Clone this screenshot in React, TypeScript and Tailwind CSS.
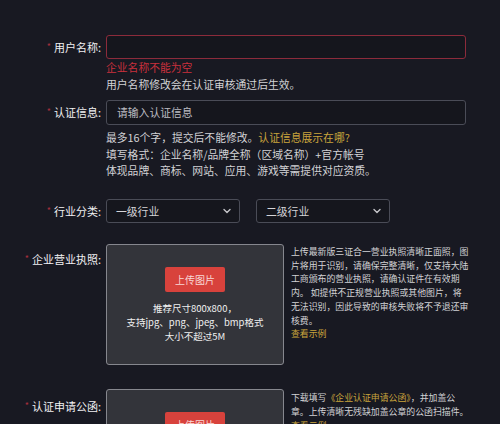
import React from "react";

const Label = ({ children, h = 24 }: { children: React.ReactNode; h?: number }) => (
  <div
    className="w-[101px] shrink-0 flex items-center justify-end text-[11px] text-[#f0f0f2] whitespace-nowrap"
    style={{ height: h }}
  >
    <span className="text-[#a8303d] text-[9px] mr-[3px] leading-none relative top-[-1px]">*</span>
    {children}
  </div>
);

const Chevron = () => (
  <svg width="10" height="10" viewBox="0 0 10 10" fill="none">
    <path d="M2 3.5 L5 6.5 L8 3.5" stroke="#c4c4c8" strokeWidth="1.4" strokeLinecap="round" strokeLinejoin="round" />
  </svg>
);

const UploadBox = ({ clip = false }: { clip?: boolean }) => (
  <div className="w-[178px] h-[121px] shrink-0 bg-[#33343a] border border-[#86878e] rounded-[3px] flex flex-col items-center">
    <div className="mt-[22px] w-[60px] h-[25px] bg-[#d8423c] rounded-[2px] flex items-center justify-center text-[10px] text-[#f8d8d6]">
      上传图片
    </div>
    {!clip && (
      <div className="mt-[9px] text-[9.5px] leading-[14px] text-[#f0f0f0] text-center whitespace-nowrap">
        <div>推荐尺寸800x800，</div>
        <div>支持jpg、png、jpeg、bmp格式</div>
        <div>大小不超过5M</div>
      </div>
    )}
  </div>
);

export default function App() {
  return (
    <div
      className="w-[500px] h-[424px] overflow-hidden bg-[#181922] pt-[35px]"
      style={{ fontFamily: '"Noto Sans CJK SC", "Noto Sans", sans-serif' }}
    >
      {/* Row 1 */}
      <div className="flex items-start">
        <Label>用户名称:</Label>
        <div className="ml-[5px]">
          <div className="w-[360px] h-[24px] bg-[#15161d] border border-[#8c2b3b] rounded-[3px]" />
          <div className="text-[10.8px] leading-[17px] text-[#c9303c]">企业名称不能为空</div>
          <div className="text-[10.8px] leading-[17px] text-[#d2d2d5]">用户名称修改会在认证审核通过后生效。</div>
        </div>
      </div>

      {/* Row 2 */}
      <div className="flex items-start mt-[7px]">
        <Label h={25}>认证信息:</Label>
        <div className="ml-[5px]">
          <div className="w-[360px] h-[25px] bg-[#15161d] border border-[#4a4c57] rounded-[3px] flex items-center pl-[10px] text-[10.8px] text-[#bdbdc2]">
            请输入认证信息
          </div>
          <div className="mt-[4px] text-[10.8px] leading-[16.5px] text-[#d2d2d5] whitespace-nowrap">
            <div>
              最多16个字，提交后不能修改。<span className="text-[#c9a43c]">认证信息展示在哪?</span>
            </div>
            <div>填写格式：企业名称/品牌全称（区域名称）+官方帐号</div>
            <div>体现品牌、商标、网站、应用、游戏等需提供对应资质。</div>
          </div>
        </div>
      </div>

      {/* Row 3 */}
      <div className="flex items-start mt-[20.5px]">
        <Label>行业分类:</Label>
        <div className="ml-[5px] flex gap-[16px]">
          <div className="w-[134px] h-[24px] bg-[#15161d] border border-[#4a4c57] rounded-[3px] flex items-center justify-between pl-[9px] pr-[7px] text-[10.8px] text-[#d4d4d8]">
            <span>一级行业</span>
            <Chevron />
          </div>
          <div className="w-[134px] h-[24px] bg-[#15161d] border border-[#4a4c57] rounded-[3px] flex items-center justify-between pl-[9px] pr-[7px] text-[10.8px] text-[#d4d4d8]">
            <span>二级行业</span>
            <Chevron />
          </div>
        </div>
      </div>

      {/* Row 4 */}
      <div className="flex items-start mt-[21px]">
        <div className="mt-[3px]">
          <Label>企业营业执照:</Label>
        </div>
        <div className="ml-[5px] flex items-start">
          <UploadBox />
          <div className="ml-[7px] mt-[1px] text-[8.9px] leading-[13.7px] text-[#d2d2d5] whitespace-nowrap">
            <div>上传最新版三证合一营业执照清晰正面照，图</div>
            <div>片将用于识别，请确保完整清晰，仅支持大陆</div>
            <div>工商颁布的营业执照，请确认证件在有效期</div>
            <div>内。 如提供不正规营业执照或其他图片，将</div>
            <div>无法识别，因此导致的审核失败将不予退还审</div>
            <div>核费。</div>
            <div className="text-[#c9a43c]">查看示例</div>
          </div>
        </div>
      </div>

      {/* Row 5 */}
      <div className="flex items-start mt-[24px]">
        <div className="mt-[5px]">
          <Label>认证申请公函:</Label>
        </div>
        <div className="ml-[5px] flex items-start">
          <UploadBox />
          <div className="ml-[7px] mt-[2px] text-[8.9px] leading-[14px] text-[#d2d2d5] whitespace-nowrap">
            <div>
              下载填写<span className="text-[#c9a43c]">《企业认证申请公函》</span>，并加盖公
            </div>
            <div>章。上传清晰无残缺加盖公章的公函扫描件。</div>
            <div className="text-[#c9a43c]">查看示例</div>
          </div>
        </div>
      </div>
    </div>
  );
}
